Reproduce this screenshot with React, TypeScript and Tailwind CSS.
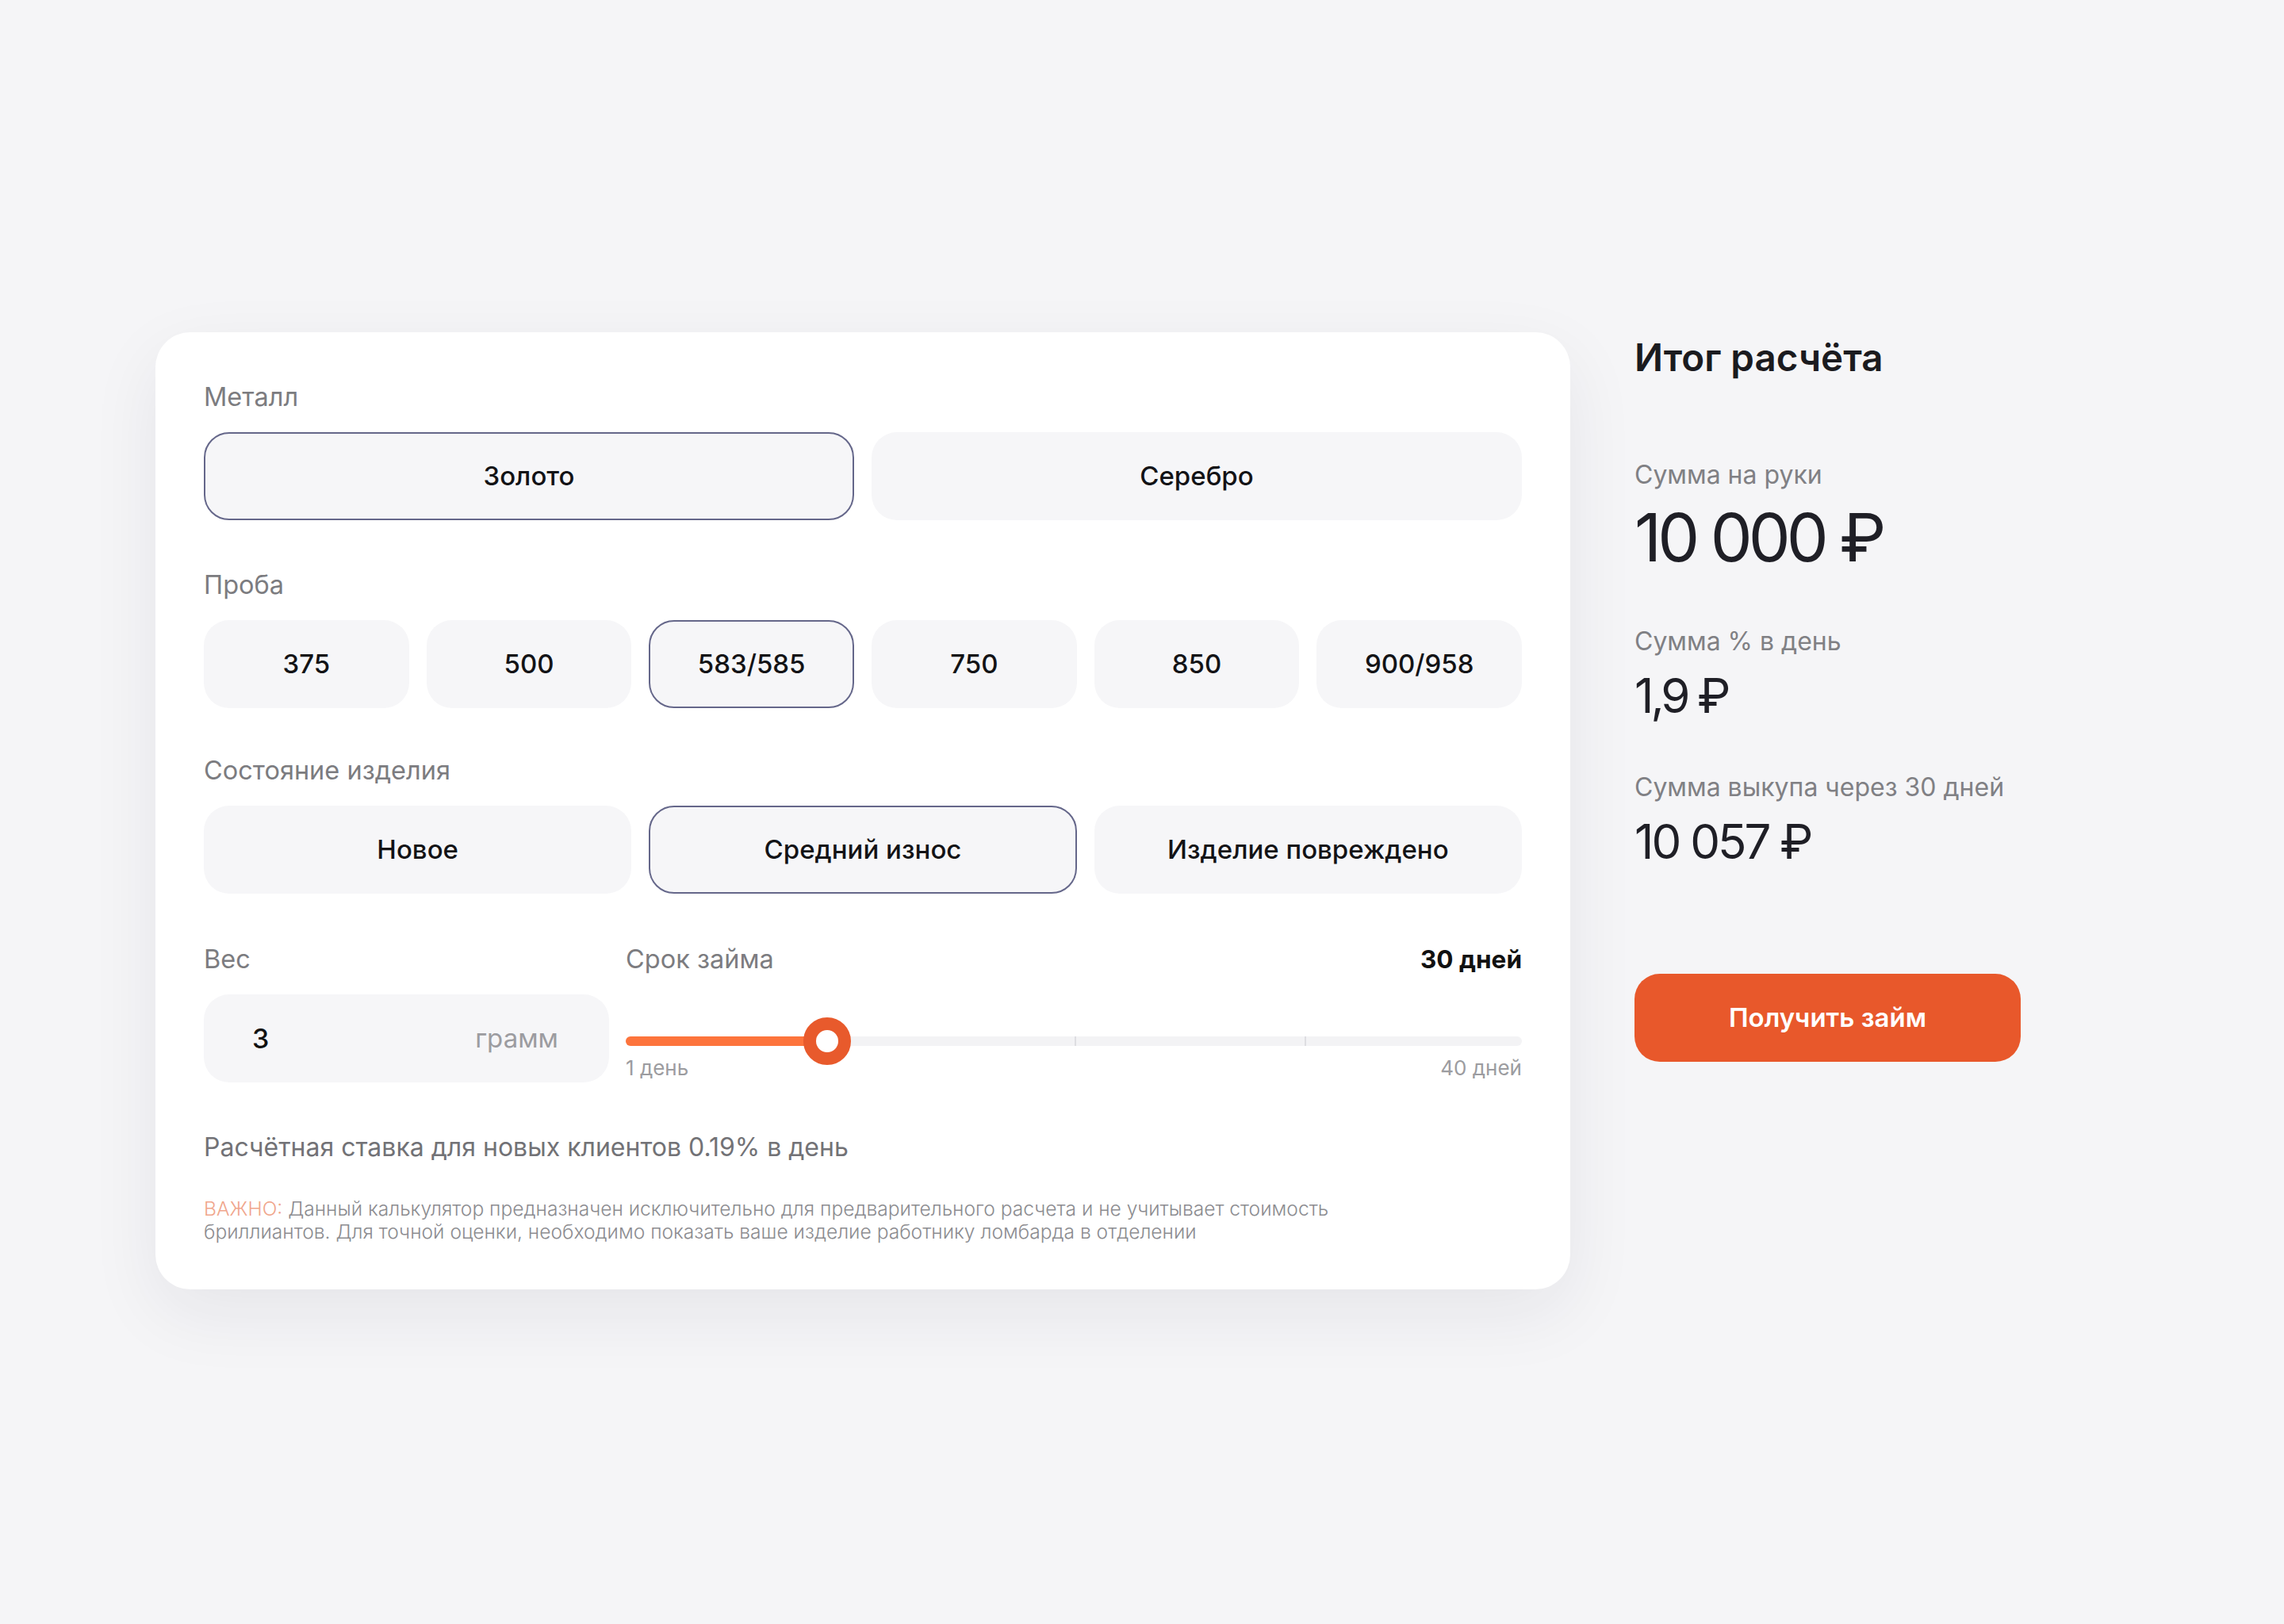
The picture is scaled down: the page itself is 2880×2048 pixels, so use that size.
import React, { useState } from 'react';

const METALS = ['Золото', 'Серебро'];
const PROBES = ['375', '500', '583/585', '750', '850', '900/958'];
const STATES = ['Новое', 'Средний износ', 'Изделие повреждено'];

interface OptionProps {
  label: string;
  active: boolean;
  onClick: () => void;
}

const Option: React.FC<OptionProps> = ({ label, active, onClick }) => (
  <button
    type="button"
    onClick={onClick}
    className={
      'h-[111px] rounded-[32px] bg-[#f6f6f8] text-[33px] font-medium text-[#131316] border-2 ' +
      (active ? 'border-[#65678a]' : 'border-transparent')
    }
  >
    {label}
  </button>
);

const Label: React.FC<{ children: React.ReactNode }> = ({ children }) => (
  <div className="text-[32.5px] leading-[36px] text-[#7c7c80] mb-[26px]">{children}</div>
);

const App: React.FC = () => {
  const [metal, setMetal] = useState(0);
  const [probe, setProbe] = useState(2);
  const [state, setState] = useState(1);

  return (
    <div className="min-h-[2048px] w-full bg-[#f5f5f7] pt-[419px] pl-[196px] flex items-start gap-[81px] font-['Inter','Noto_Sans',sans-serif]">
      {/* Calculator card */}
      <div className="w-[1784px] rounded-[44px] bg-white px-[61px] pt-[64px] pb-[58px] shadow-[0_30px_90px_rgba(30,30,50,0.07)]">
        <Label>Металл</Label>
        <div className="grid grid-cols-2 gap-[22px]">
          {METALS.map((m, i) => (
            <Option key={m} label={m} active={metal === i} onClick={() => setMetal(i)} />
          ))}
        </div>

        <div className="mt-[64px]">
          <Label>Проба</Label>
          <div className="grid grid-cols-6 gap-[22px]">
            {PROBES.map((p, i) => (
              <Option key={p} label={p} active={probe === i} onClick={() => setProbe(i)} />
            ))}
          </div>
        </div>

        <div className="mt-[61px]">
          <Label>Состояние изделия</Label>
          <div className="grid grid-cols-3 gap-[22px]">
            {STATES.map((s, i) => (
              <Option key={s} label={s} active={state === i} onClick={() => setState(i)} />
            ))}
          </div>
        </div>

        {/* Weight + term */}
        <div className="mt-[65px] flex gap-[21px]">
          <div className="w-[511px]">
            <Label>Вес</Label>
            <div className="h-[111px] rounded-[32px] bg-[#f6f6f8] flex items-center justify-between pl-[61px] pr-[64px]">
              <span className="text-[34px] font-medium text-[#111]">3</span>
              <span className="text-[33px] text-[#9c9ca0]">грамм</span>
            </div>
          </div>

          <div className="flex-1">
            <div className="flex justify-between items-center text-[32.5px] leading-[36px] mb-[26px]">
              <span className="text-[#7c7c80]">Срок займа</span>
              <span className="font-bold text-[#111] text-[31.5px]">30 дней</span>
            </div>
            <div className="pt-[53px]">
              <div className="relative h-[12px] rounded-full bg-[#f3f3f5]">
                <div className="absolute left-0 top-0 h-[12px] w-[240px] rounded-full bg-[#fd743c]" />
                <div className="absolute left-[566px] top-0 h-[12px] w-[2px] bg-[#dedee2]" />
                <div className="absolute left-[856px] top-0 h-[12px] w-[2px] bg-[#dedee2]" />
                <div className="absolute left-[224px] top-[-24px] h-[60px] w-[60px] rounded-full border-[16px] border-[#e85a2c] bg-white" />
              </div>
              <div className="mt-[13px] flex justify-between text-[26px] leading-[30px] text-[#9c9ca0]">
                <span>1 день</span>
                <span>40 дней</span>
              </div>
            </div>
          </div>
        </div>

        <div className="mt-[64px] text-[32px] leading-[36px] text-[#727276]">
          Расчётная ставка для новых клиентов 0.19% в день
        </div>

        <div className="mt-[45px] text-[24.6px] leading-[29px] text-[#8c8c90] font-light">
          <span className="text-[#f0a68c]">ВАЖНО:</span> Данный калькулятор предназначен исключительно для
          предварительного расчета и не учитывает стоимость
          <br />
          бриллиантов. Для точной оценки, необходимо показать ваше изделие работнику ломбарда в отделении
        </div>
      </div>

      {/* Result column */}
      <div className="w-[620px] flex flex-col items-start">
        <h2 className="text-[47.5px] leading-[60px] mt-[2px] font-semibold text-[#1b1b1f]">Итог расчёта</h2>

        <div className="mt-[99px] text-[32px] leading-[38px] text-[#808084]">Сумма на руки</div>
        <div className="mt-[16px] text-[84px] leading-[88px] text-[#1f1f26] tracking-[-5px]">10 000 ₽</div>

        <div className="mt-[68px] text-[32px] leading-[38px] text-[#808084]">Сумма % в день</div>
        <div className="mt-[14px] text-[60px] leading-[70px] text-[#1f1f26] tracking-[-4px]">1,9 ₽</div>

        <div className="mt-[62px] text-[32px] leading-[38px] text-[#808084]">Сумма выкупа через 30 дней</div>
        <div className="mt-[14px] text-[60px] leading-[70px] text-[#1f1f26] tracking-[-3px]">10 057 ₽</div>

        <button
          type="button"
          className="mt-[132px] w-[487px] h-[111px] rounded-[32px] bg-[#e8582b] text-white text-[33px] font-semibold"
        >
          Получить займ
        </button>
      </div>
    </div>
  );
};

export default App;
